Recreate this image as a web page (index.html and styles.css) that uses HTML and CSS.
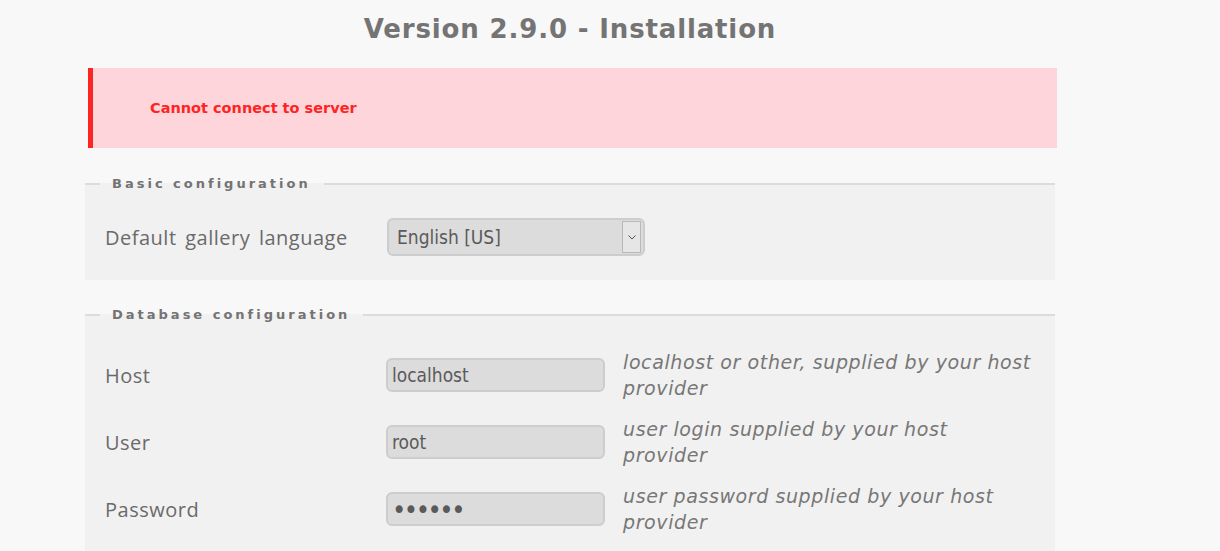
FILE: index.html
```html
<!DOCTYPE html>
<html>
<head>
    <title>Piwigo 2.9.0 - Installation</title>
    <link rel="stylesheet" href="styles.css">
</head>
<body>
    <div class="content">
        <h2 class="title">Version 2.9.0 - Installation</h2>

        <div class="errors">
            <ul>
                <li>Cannot connect to server</li>
            </ul>
        </div>

        <form method="post" action="install.php">
            <fieldset>
                <legend>Basic configuration</legend>
                <div class="row">
                    <label class="label">Default gallery language</label>
                    <div class="select">
                        <span>English [US]</span>
                        <span class="arrow">
                            <svg width="8" height="5" viewBox="0 0 8 5"><path d="M0.5 0.5 L4 4 L7.5 0.5" fill="none" stroke="#555" stroke-width="1"/></svg>
                        </span>
                    </div>
                </div>
            </fieldset>

            <fieldset class="db">
                <legend>Database configuration</legend>
                <div class="row">
                    <label class="label">Host</label>
                    <input type="text" class="field" value="localhost">
                    <span class="help">localhost or other, supplied by your host provider</span>
                </div>
                <div class="row">
                    <label class="label">User</label>
                    <input type="text" class="field" value="root">
                    <span class="help">user login supplied by your host provider</span>
                </div>
                <div class="row">
                    <label class="label">Password</label>
                    <input type="password" class="field pass" value="secret">
                    <span class="help">user password supplied by your host provider</span>
                </div>
                <div class="row">
                    <label class="label">Database name</label>
                    <input type="text" class="field" value="">
                    <span class="help">also given by your host provider</span>
                </div>
            </fieldset>
        </form>
    </div>
</body>
</html>
```

FILE: styles.css
```css
body {
    margin: 0;
    background-color: #f8f8f8;
    font-family: "DejaVu Sans Condensed", "DejaVu Sans", sans-serif;
    color: #666;
}
.content {
    width: 970px;
    margin-left: 85px;
}
.title {
    margin: 0;
    padding-top: 14px;
    height: 54px;
    text-align: center;
    font-family: "DejaVu Sans", sans-serif;
    font-size: 26px;
    font-weight: bold;
    letter-spacing: 0.85px;
    color: #747474;
}
.errors {
    margin: 0 -2px 0 3px;
    height: 80px;
    display: flex;
    align-items: center;
    background-color: #fdd5da;
    border-left: 5px solid #ff2424;
    font-family: "DejaVu Sans", sans-serif;
    font-size: 14.5px;
    font-weight: bold;
    color: #ff2424;
}
.errors ul {
    list-style: none;
    margin: 0;
    padding: 0 0 0 57px;
}
fieldset {
    margin: 28px 0 0;
    padding: 20px 20px 17px;
    border: none;
    border-top: 2px solid #dcdcdc;
    background-color: #f1f1f1;
}
fieldset.db {
    margin-top: 27px;
    padding-top: 27px;
}
legend {
    margin-left: -5px;
    padding: 0 13px 0 12px;
    font-family: "DejaVu Sans", sans-serif;
    font-size: 13px;
    font-weight: bold;
    letter-spacing: 3px;
    color: #737373;
}
.row {
    display: grid;
    grid-template-columns: 263px 219px 410px;
    column-gap: 18px;
    align-items: center;
    min-height: 52px;
    margin-bottom: 15px;
}
.row:last-child {
    margin-bottom: 0;
}
.label {
    font-family: "Open Sans", sans-serif;
    font-size: 20px;
    letter-spacing: 0.5px;
    word-spacing: 3px;
    color: #6a6a6a;
}
.field {
    box-sizing: border-box;
    width: 219px;
    height: 34px;
    margin: 0;
    padding: 0 4px;
    border: 2px solid #cdcdcd;
    border-radius: 6px;
    background-color: #dcdcdc;
    font-family: "DejaVu Sans Condensed", "DejaVu Sans", sans-serif;
    font-size: 19px;
    color: #5a5a5a;
    outline: none;
}
.field.pass {
    font-size: 27px;
    letter-spacing: -2.5px;
}
.help {
    font-family: "DejaVu Sans", sans-serif;
    font-style: italic;
    font-size: 19px;
    letter-spacing: 0.6px;
    line-height: 26px;
    color: #777;
}
.select {
    box-sizing: border-box;
    width: 258px;
    height: 38px;
    margin-left: 1px;
    display: flex;
    align-items: center;
    justify-content: space-between;
    padding: 0 2px 0 8px;
    border: 2px solid #cdcdcd;
    border-radius: 6px;
    background-color: #dcdcdc;
    font-size: 19px;
    color: #5a5a5a;
}
.arrow {
    box-sizing: border-box;
    width: 19px;
    height: 32px;
    display: flex;
    align-items: center;
    justify-content: center;
    border: 1px solid #b8b8b8;
    background-color: #e6e6e6;
}
```
